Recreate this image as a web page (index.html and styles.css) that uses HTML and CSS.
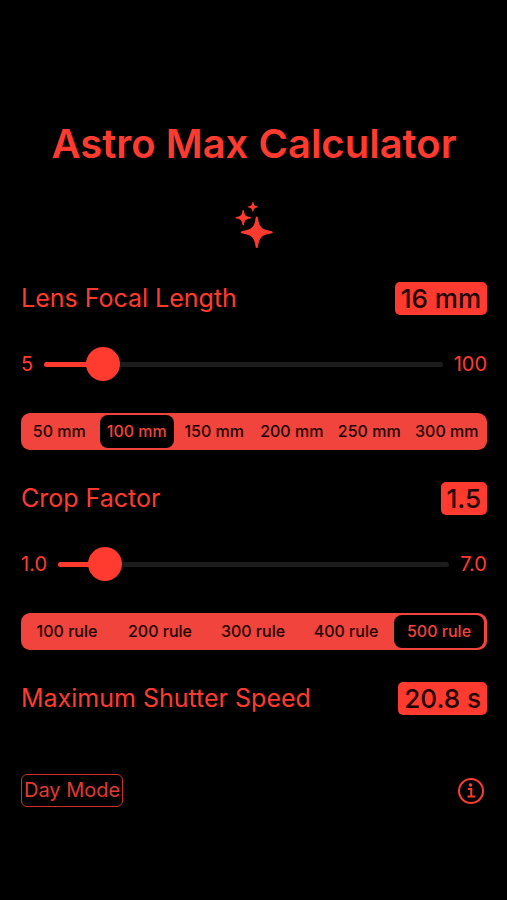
FILE: index.html
```html
<!DOCTYPE html>
<html lang="en">
<head>
<meta charset="utf-8">
<meta name="viewport" content="width=device-width, initial-scale=1">
<title>Astro Max Calculator</title>
<link rel="stylesheet" href="styles.css">
</head>
<body>
<main class="app">
  <h1 class="title">Astro Max Calculator</h1>
  <svg class="sparkles" viewBox="0 0 40 48" aria-hidden="true">
    <path d="M22.8 15.5C23.3 15.5 23.8 16 24 17C25.2 25.500 27 28.300 37 30C38.200 30.200 38.800 30.600 38.800 31.200S38.200 32.200 37 32.400C27 34 25.200 37 24 45.500C23.800 46.500 23.300 47 22.800 47S21.800 46.500 21.600 45.500C20.400 37 18.500 34 8.500 32.400C7.300 32.200 6.800 31.800 6.800 31.200S7.300 30.200 8.500 30C18.500 28.300 20.400 25.500 21.600 17C21.800 16 22.300 15.500 22.800 15.500Z"/>
    <path d="M9.200 9C9.700 9 9.900 9.400 10 10C10.500 14 11.500 15.300 16 16C16.700 16.100 17 16.400 17 16.800S16.700 17.500 16 17.600C11.500 18.300 10.500 19.600 10 23.600C9.900 24.200 9.700 24.600 9.200 24.600S8.500 24.200 8.400 23.600C7.900 19.600 6.900 18.300 2.400 17.600C1.700 17.500 1.400 17.200 1.400 16.800S1.700 16.100 2.400 16C6.900 15.300 7.900 14 8.400 10C8.500 9.400 8.700 9 9.200 9Z"/>
    <path d="M18.900 1C19.200 1 19.400 1.200 19.500 1.700C19.900 4.100 20.500 4.900 23 5.300C23.500 5.400 23.800 5.600 23.800 5.900S23.500 6.400 23 6.500C20.500 6.900 19.900 7.700 19.500 10.100C19.400 10.600 19.200 10.800 18.900 10.800S18.400 10.600 18.300 10.100C17.900 7.700 17.300 6.900 14.800 6.500C14.300 6.400 14 6.200 14 5.900S14.300 5.400 14.800 5.300C17.300 4.900 17.900 4.100 18.300 1.700C18.400 1.200 18.600 1 18.900 1Z"/>
  </svg>

  <div class="row">
    <label class="label" for="focal">Lens Focal Length</label>
    <output class="value" for="focal">16 mm</output>
  </div>
  <div class="slider">
    <span>5</span>
    <input class="range range-focal" id="focal" type="range" min="5" max="100" value="16">
    <span>100</span>
  </div>
  <fieldset class="segments" aria-label="Focal length range">
    <label class="segment"><input type="radio" name="range"><span>50 mm</span></label>
    <label class="segment"><input type="radio" name="range" checked><span>100 mm</span></label>
    <label class="segment"><input type="radio" name="range"><span>150 mm</span></label>
    <label class="segment"><input type="radio" name="range"><span>200 mm</span></label>
    <label class="segment"><input type="radio" name="range"><span>250 mm</span></label>
    <label class="segment"><input type="radio" name="range"><span>300 mm</span></label>
  </fieldset>

  <div class="row">
    <label class="label" for="crop">Crop Factor</label>
    <output class="value" for="crop">1.5</output>
  </div>
  <div class="slider">
    <span>1.0</span>
    <input class="range range-crop" id="crop" type="range" min="1" max="7" step="0.1" value="1.5">
    <span>7.0</span>
  </div>
  <fieldset class="segments" aria-label="Exposure rule">
    <label class="segment"><input type="radio" name="rule"><span>100 rule</span></label>
    <label class="segment"><input type="radio" name="rule"><span>200 rule</span></label>
    <label class="segment"><input type="radio" name="rule"><span>300 rule</span></label>
    <label class="segment"><input type="radio" name="rule"><span>400 rule</span></label>
    <label class="segment"><input type="radio" name="rule" checked><span>500 rule</span></label>
  </fieldset>

  <div class="row">
    <span class="label">Maximum Shutter Speed</span>
    <output class="value">20.8 s</output>
  </div>

  <footer class="footer">
    <button class="mode" type="button">Day Mode</button>
    <button class="info" type="button" aria-label="Information">
      <svg viewBox="0 0 28 28" aria-hidden="true">
        <circle class="ring" cx="14" cy="14" r="12"/>
        <circle cx="13.500" cy="8" r="1.800"/>
        <path class="stem" d="M11 12H14.300V19.500M10.500 19.500H18"/>
      </svg>
    </button>
  </footer>
</main>
</body>
</html>
```
FILE: styles.css
```css
:root {
  --red: #ff3b30;
  --segment: #f0443c;
  --ink: #200000;
}

* {
  box-sizing: border-box;
}

body {
  margin: 0;
  background: #000;
  color: var(--red);
  font-family: Inter, "Liberation Sans", sans-serif;
}

.app {
  display: flex;
  flex-direction: column;
  gap: 32px;
  padding: 120px 20px 92px 21px;
}

.title {
  margin: 0;
  font-size: 40px;
  line-height: 48px;
  font-weight: 600;
  text-align: center;
}

.sparkles {
  width: 40px;
  height: 50px;
  align-self: center;
  fill: var(--red);
}

.row {
  display: flex;
  align-items: center;
  justify-content: space-between;
}

.label {
  font-size: 25px;
  line-height: 33px;
}

.value {
  padding: 0 6px;
  border-radius: 5px;
  background: var(--red);
  color: var(--ink);
  font-size: 26px;
  line-height: 33px;
  font-weight: 500;
}

.slider {
  display: flex;
  align-items: center;
  gap: 11px;
  font-size: 20px;
  line-height: 34px;
}

.range {
  flex: 1;
  min-width: 0;
  height: 34px;
  margin: 0;
  appearance: none;
  background: transparent;
}

.range-focal {
  --fill: 14%;
}

.range-crop {
  --fill: 12%;
}

.range::-webkit-slider-runnable-track {
  height: 5px;
  border-radius: 3px;
  background: linear-gradient(to right, var(--red) var(--fill), #1c1c1c var(--fill));
}

.range::-webkit-slider-thumb {
  appearance: none;
  width: 34px;
  height: 34px;
  margin-top: -15px;
  border-radius: 50%;
  background: var(--red);
}

.segments {
  display: flex;
  min-width: 0;
  height: 37px;
  margin: 0;
  padding: 0 1px 0 0;
  border: 0;
  border-radius: 9px;
  background: var(--segment);
}

.segment {
  position: relative;
  flex: 1;
  display: flex;
  padding: 2px 2px 2px 1px;
  color: var(--ink);
  font-size: 16px;
  line-height: 33px;
  font-weight: 500;
  text-align: center;
  white-space: nowrap;
}

.segment input {
  position: absolute;
  inset: 0;
  margin: 0;
  opacity: 0;
}

.segment span {
  flex: 1;
  border-radius: 8px;
}

.segment input:checked + span {
  background: #000;
  color: var(--segment);
}

.footer {
  display: flex;
  align-items: center;
  justify-content: space-between;
  margin-top: 27px;
}

.mode {
  padding: 0 2px;
  border: 1px solid #c8322a;
  border-radius: 6px;
  background: transparent;
  color: #e03a32;
  font: inherit;
  font-size: 20px;
  line-height: 31px;
}

.info {
  display: flex;
  padding: 0;
  margin-right: 2px;
  border: 0;
  background: transparent;
}

.info svg {
  width: 28px;
  height: 28px;
  fill: var(--red);
}

.info .ring,
.info .stem {
  fill: none;
  stroke: var(--red);
  stroke-width: 2;
}
```
